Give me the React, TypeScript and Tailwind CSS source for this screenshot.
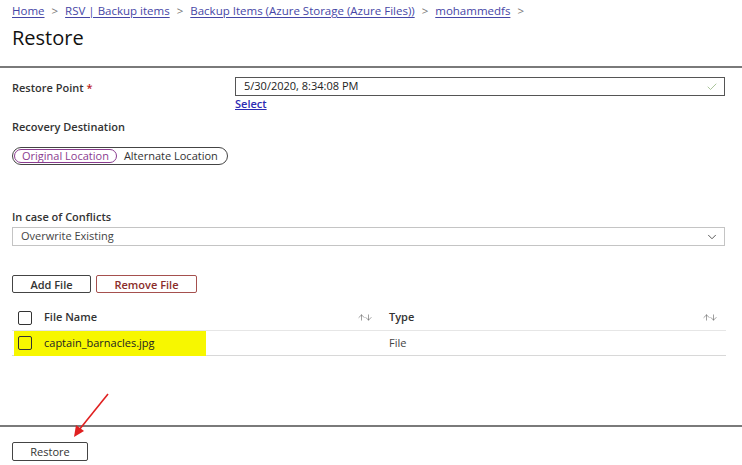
import { ChevronDown, Check, ArrowUp, ArrowDown } from "lucide-react";

const CRUMBS = ["Home", "RSV | Backup items", "Backup Items (Azure Storage (Azure Files))", "mohammedfs"];

function SortIcon() {
  return (
    <span className="flex items-center text-[#555]">
      <ArrowUp size={9} strokeWidth={1.5} className="-mr-[2px]" />
      <ArrowDown size={9} strokeWidth={1.5} />
    </span>
  );
}

function Box() {
  return <span className="block w-[14px] h-[14px] border border-[#333] rounded-[2px] bg-transparent" />;
}

export default function App() {
  return (
    <div
      className="relative w-[742px] h-[465px] bg-white text-[#222] overflow-hidden flex flex-col"
      style={{ fontFamily: '"Open Sans", "Noto Sans", sans-serif' }}
    >
      {/* header */}
      <div className="px-3 pt-[3px] h-[68px] border-b-2 border-[#7a7a7a]">
        <div className="flex items-center gap-[7px] text-[11.5px] leading-[16px]">
          {CRUMBS.map((c) => (
            <span key={c} className="flex items-center gap-[7px]">
              <span className="text-[#4646a6] underline underline-offset-2">{c}</span>
              <span className="text-[#777]">&gt;</span>
            </span>
          ))}
        </div>
        <h1 className="mt-[7px] text-[20px] leading-[23px] font-medium text-[#111]">Restore</h1>
      </div>

      {/* form */}
      <div className="flex-1 px-3 text-[11px]">
        <div className="flex mt-[9px]">
          <div className="w-[223px] pt-[3px] font-semibold text-[#333]">
            Restore Point <span className="text-[#b22]">*</span>
          </div>
          <div className="flex flex-col w-[490px]">
            <div className="h-[19px] border border-[#555] flex items-center justify-between pl-[8px] pr-[6px]">
              <span>5/30/2020, 8:34:08 PM</span>
              <Check size={12} strokeWidth={1.5} className="text-[#8fb27a]" />
            </div>
            <span className="text-[#2b2bb3] font-semibold underline leading-[14px] mt-[1px]">Select</span>
          </div>
        </div>

        <div className="mt-[8px] font-semibold text-[#333] leading-[16px]">Recovery Destination</div>

        <div className="mt-[12px] inline-flex items-center h-[18px] border border-[#444] rounded-full pl-[1px] pr-[9px] gap-[7px]">
          <span className="h-[14px] px-[7px] flex items-center rounded-full border border-[#8a3b8f] text-[#8a3b8f]">
            Original Location
          </span>
          <span className="text-[#333]">Alternate Location</span>
        </div>

        <div className="mt-[44px] font-semibold text-[#333] leading-[16px]">In case of Conflicts</div>
        <div className="mt-[2px] w-[713px] h-[19px] border border-[#c4c4c4] flex items-center justify-between pl-[8px] pr-[5px] text-[#444]">
          <span>Overwrite Existing</span>
          <ChevronDown size={14} strokeWidth={1.5} className="text-[#444]" />
        </div>

        <div className="mt-[29px] flex gap-[5px]">
          <button className="w-[79px] h-[18px] border border-[#444] rounded-[2px] font-semibold text-[#333] leading-none">
            Add File
          </button>
          <button className="w-[101px] h-[18px] border border-[#a5504e] rounded-[2px] font-semibold text-[#8a2c2a] leading-none">
            Remove File
          </button>
        </div>

        <div className="mt-[12px] w-[714px]">
          <div className="flex items-center h-[26px] border-b border-[#e6e6e6] font-semibold text-[#333]">
            <span className="w-[32px] pl-[6px]"><Box /></span>
            <span className="w-[313px]">File Name</span>
            <span className="w-[32px]"><SortIcon /></span>
            <span className="w-[313px]">Type</span>
            <SortIcon />
          </div>
          <div className="flex items-center h-[25px] border-b border-[#d8d8d8]">
            <div className="w-[192px] ml-[2px] h-[25px] bg-[#f7f700] flex items-center">
              <span className="w-[30px] pl-[4px]"><Box /></span>
              <span>captain_barnacles.jpg</span>
            </div>
            <span className="ml-[183px] text-[#444]">File</span>
          </div>
        </div>
      </div>

      {/* footer */}
      <div className="h-[40px] border-t-2 border-[#7a7a7a] px-3 pt-[11px]">
        <button className="w-[76px] h-[19px] border border-[#444] rounded-[2px] text-[11px] text-[#333] leading-none">
          Restore
        </button>
      </div>

      {/* annotation arrow */}
      <svg className="absolute left-0 top-0 pointer-events-none" width="742" height="465">
        <line x1="108" y1="394" x2="79" y2="430" stroke="#e02020" strokeWidth="1.6" />
        <polygon points="74,437 76,425 84,431" fill="#e02020" />
      </svg>
    </div>
  );
}
